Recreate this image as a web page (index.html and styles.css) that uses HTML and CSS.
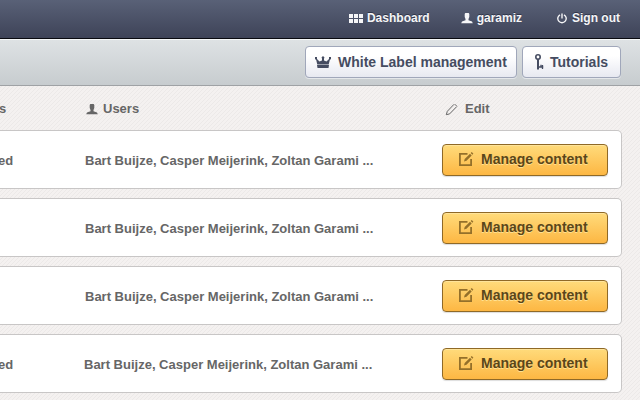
FILE: index.html
```html
<!DOCTYPE html>
<html lang="en">
<head>
<meta charset="utf-8">
<title>Dashboard</title>
<link rel="stylesheet" href="styles.css">
</head>
<body>
<svg class="sprites" aria-hidden="true">
  <symbol id="user" viewBox="0 0 12 11"><path d="M4.300 0H7.700L8.300 1V4L7.500 6V7.300L11 8.500L11.800 10.200H.2L1 8.500L4.500 7.300V6L3.700 4V1Z"/></symbol>
  <symbol id="compose" viewBox="0 0 16 16"><path d="M9.500 2.900H1.900V14.100H13.100V8" fill="none" stroke="currentColor" stroke-width="1.800"/><path d="M6 10.500L6.700 8L12 2.800L13.700 4.500L8.500 9.700Z M12.700 2.100L13.800 1L15.400 2.700L14.300 3.800Z"/></symbol>
</svg>
<header class="topbar">
  <a class="nav dash"><svg width="14" height="9" viewBox="0 0 14 9"><path d="M0 0h4v4H0zM5 0h4v4H5zM10 0h4v4h-4zM0 5h4v4H0zM5 5h4v4H5zM10 5h4v4h-4z"/></svg>Dashboard</a>
  <a class="nav account"><svg width="12" height="11"><use href="#user"/></svg>garamiz</a>
  <a class="nav signout"><svg width="10" height="11" viewBox="0 0 10 11"><path d="M3 1.800A4.200 4.200 0 1 0 7 1.800M5 .5V5.500" fill="none" stroke="currentColor" stroke-width="1.400"/></svg>Sign out</a>
</header>
<div class="toolbar">
  <a class="tool label"><svg width="16" height="12" viewBox="0 0 16 12"><path d="M0 1H2V3L4.500 5.500L7 4.500V2.500L6.500 1.500L8 0L9.500 1.500L9 2.500V4.500L11.500 5.500L14 3V1H16V3L14.800 4L13.700 8.500H2.300L1.200 4L0 3ZM2 9H14L13.500 12H2.500Z"/></svg>White Label management</a>
  <a class="tool tutorials"><svg width="9" height="16" viewBox="0 0 9 16"><g fill="none" stroke="currentColor"><circle cx="3" cy="3" r="2.200" stroke-width="1.600"/><path d="M3 5V15.500" stroke-width="2"/><path d="M4 13H8.300M6 10.800V13M7.500 11V15" stroke-width="1.300"/></g></svg>Tutorials</a>
</div>
<main>
  <div class="row heading">
    <span class="status">s</span>
    <span class="users"><svg width="12" height="11"><use href="#user"/></svg>Users</span>
    <span class="edit"><svg width="13" height="13" viewBox="0 0 13 13"><path d="M1.300 11.700L2.300 8.300L9 1.300M4.600 10.900L11.800 3.500M1.300 11.700L4.600 10.900M9.800 1.200L11.800 3.200" fill="none" stroke="currentColor"/></svg>Edit</span>
  </div>
  <div class="row card"><span class="status">ed</span><span class="users">Bart Buijze, Casper Meijerink, Zoltan Garami ...</span><a class="manage"><svg width="16" height="16"><use href="#compose"/></svg>Manage content</a></div>
  <div class="row card"><span class="status"></span><span class="users">Bart Buijze, Casper Meijerink, Zoltan Garami ...</span><a class="manage"><svg width="16" height="16"><use href="#compose"/></svg>Manage content</a></div>
  <div class="row card"><span class="status"></span><span class="users">Bart Buijze, Casper Meijerink, Zoltan Garami ...</span><a class="manage"><svg width="16" height="16"><use href="#compose"/></svg>Manage content</a></div>
  <div class="row card"><span class="status">ed</span><span class="users">Bart Buijze, Casper Meijerink, Zoltan Garami ...</span><a class="manage"><svg width="16" height="16"><use href="#compose"/></svg>Manage content</a></div>
</main>
</body>
</html>
```
FILE: styles.css
```css
* { box-sizing: border-box; }
body {
  margin: 0;
  height: 400px;
  overflow: hidden;
  font: bold 13px/16px "Liberation Sans", Arial, sans-serif;
  color: #666;
  background: #f3f0ef linear-gradient(135deg, #f4f1f0 40%, #ece9e8 40% 60%, #f4f1f0 60%) 0 0 / 4px 4px;
}
svg { flex: none; fill: currentColor; }
.sprites { display: none; }
.topbar {
  display: flex;
  justify-content: flex-end;
  height: 39px;
  padding: 10px 20px 0 0;
  border-bottom: 1px solid #090a10;
  background: linear-gradient(#596177, #3e4358);
  color: #f5f5f7;
  font-size: 12px;
  text-shadow: 0 -1px 0 #30354a;
}
.nav { display: flex; height: 16px; align-items: center; gap: 4px; }
.account { margin-left: 31px; }
.signout { margin-left: 35px; gap: 5px; }
.toolbar {
  display: flex;
  justify-content: flex-end;
  gap: 5px;
  height: 47px;
  padding: 6px 19px 0 0;
  border-top: 1px solid #f5f7f8;
  border-bottom: 1px solid #9fa2a5;
  background: linear-gradient(#dee2e4, #c7cccf);
}
.tool {
  display: flex;
  align-items: center;
  height: 32px;
  border: 1px solid #a0a7ba;
  border-radius: 4px;
  background: linear-gradient(#fff 30%, #e7e9f1);
  box-shadow: 0 1px 0 #e4e7ea;
  color: #454c61;
  font-size: 14px;
}
.label { width: 212px; padding-left: 9px; gap: 7px; }
.tutorials { width: 99px; padding-left: 12px; gap: 6px; }
.row { display: flex; align-items: center; width: 622px; }
.heading { height: 44px; padding-top: 2px; }
.status { width: 85px; text-indent: -1px; }
.users { display: flex; align-items: center; gap: 5px; width: 357px; }
.heading .users { padding-left: 1px; }
.edit { display: flex; align-items: center; gap: 7px; padding-left: 3px; }
.card {
  height: 59px;
  margin-bottom: 9px;
  border: 1px solid #c8c6c6;
  border-left: 0;
  border-radius: 0 5px 5px 0;
  background: #fff;
}
.card .status { text-indent: -2px; }
.card .status, .card .users { padding-top: 2px; }
.card:last-child .status { width: 84px; }
.card:last-child .users { width: 358px; }
.manage {
  display: flex;
  align-items: center;
  gap: 7px;
  width: 166px;
  height: 32px;
  padding: 0 0 2px 15px;
  border: 1px solid #8f6927;
  border-radius: 4px;
  background: linear-gradient(#ffdb7b, #fdb743);
  box-shadow: inset 0 1px 0 #ffe49a, 0 1px 1px #ddd;
  color: #5b4619;
  font-size: 14px;
  text-shadow: 0 1px 0 #ffe193;
}
.manage svg { color: #94702a; }
```
